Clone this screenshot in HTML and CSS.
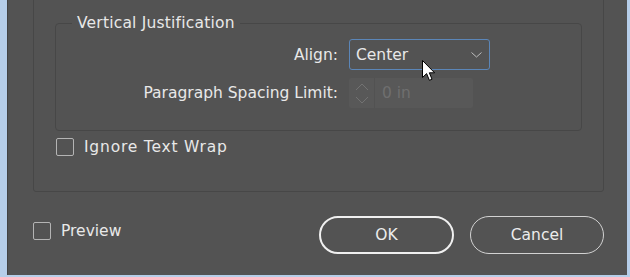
FILE: index.html
```html
<!DOCTYPE html>
<html>
<head>
<meta charset="utf-8">
<link rel="stylesheet" href="styles.css">
</head>
<body>
<div class="window">
  <div class="dialog">
    <div class="panel">
      <div class="group">
        <span class="legend">Vertical Justification</span>
        <div class="form">
          <span class="lbl">Align:</span>
          <div class="select">
            <span>Center</span>
            <svg class="chev" width="11" height="6" viewBox="0 0 11 6"><path d="M0.5 0.5 L5.5 5 L10.5 0.5" fill="none" stroke="#bdbdbd" stroke-width="1"/></svg>
          </div>
          <span class="lbl">Paragraph Spacing Limit:</span>
          <div class="spinner">
            <div class="arrows">
              <svg width="14" height="26" viewBox="0 0 14 26"><path d="M1 10 L7 4 L13 10" fill="none" stroke="#727272" stroke-width="1"/><path d="M1 17 L7 23 L13 17" fill="none" stroke="#727272" stroke-width="1"/></svg>
            </div>
            <span class="val">0 in</span>
          </div>
        </div>
      </div>
      <div class="check-row inner-check"><span class="box"></span><span class="wide">Ignore Text Wrap</span></div>
    </div>
    <div class="footer">
      <div class="check-row preview"><span class="box"></span><span>Preview</span></div>
      <div class="buttons">
        <button class="btn primary">OK</button>
        <button class="btn">Cancel</button>
      </div>
    </div>
  </div>
  <svg class="cursor" width="14" height="22" viewBox="0 0 14 22"><path d="M0.5 0.5 L0.5 17.5 L4.6 13.6 L7.4 20.3 L10 19.2 L7.3 12.8 L12.6 12.8 Z" fill="#ffffff" stroke="#000000" stroke-width="1" stroke-linejoin="miter"/></svg>
</div>
</body>
</html>
```
FILE: styles.css
```css
* { box-sizing: border-box; }
html, body { margin: 0; padding: 0; }
body {
  width: 630px;
  height: 277px;
  overflow: hidden;
  background: #535353;
  font-family: "DejaVu Sans", Verdana, sans-serif;
  font-size: 15.5px;
  color: #e8e8e8;
}
.window {
  position: relative;
  width: 630px;
  height: 277px;
  display: flex;
  border-left: 7px solid #b6cee9;
  border-right: 3px solid #b6cee9;
  border-bottom: 2px solid #b6cee9;
  overflow: hidden;
}
.dialog {
  flex: 1;
  display: flex;
  flex-direction: column;
  background: #535353;
  border-left: 1px solid #434343;
}
.panel {
  margin-left: 25px;
  margin-top: -20px;
  width: 571px;
  height: 212px;
  border: 1px solid #474747;
  border-radius: 3px;
  display: flex;
  flex-direction: column;
}
.group {
  position: relative;
  margin-left: 21px;
  margin-top: 42px;
  width: 527px;
  height: 108px;
  border: 1px solid #474747;
  border-radius: 4px;
  padding-top: 15px;
}
.legend {
  position: absolute;
  left: 16px;
  top: -11px;
  padding: 0 5px 0 5px;
  background: #535353;
  line-height: 20px;
  letter-spacing: 0.2px;
}
.form {
  display: grid;
  grid-template-columns: 282px auto;
  column-gap: 11px;
  row-gap: 8px;
  align-items: center;
}
.lbl {
  text-align: right;
  line-height: 20px;
}
.select {
  width: 141px;
  height: 31px;
  border: 1px solid #5b86b8;
  border-radius: 3px;
  display: flex;
  align-items: center;
  justify-content: space-between;
  padding: 0 7px 0 6px;
}
.chev { margin-top: 1px; }
.spinner {
  width: 124px;
  height: 30px;
  background: #585858;
  border-radius: 2px;
  display: flex;
  align-items: center;
}
.arrows {
  width: 26px;
  height: 30px;
  border-right: 1px solid #525252;
  display: flex;
  align-items: center;
  justify-content: center;
}
.val {
  margin-left: 7px;
  color: #6f6f6f;
}
.check-row {
  display: flex;
  align-items: center;
  line-height: 20px;
}
.box {
  width: 18px;
  height: 18px;
  border: 1px solid #b4b4b4;
  border-radius: 2px;
  margin-right: 10px;
}
.wide { letter-spacing: 0.8px; }
.inner-check {
  margin-left: 22px;
  margin-top: 6px;
}
.footer {
  display: flex;
  justify-content: space-between;
  margin-left: 25px;
  margin-right: 23px;
  margin-top: 24px;
}
.preview {
  align-self: flex-start;
  margin-top: 5px;
}
.buttons {
  display: flex;
  gap: 16px;
}
.btn {
  width: 134px;
  height: 38px;
  border-radius: 19px;
  border: 1px solid #d2d2d2;
  background: transparent;
  color: #ececec;
  font-family: "DejaVu Sans", Verdana, sans-serif;
  font-size: 15.5px;
  padding: 0;
}
.btn.primary {
  width: 135px;
  border: 2px solid #f0f0f0;
}
.cursor {
  position: absolute;
  left: 415px;
  top: 60px;
}
```
